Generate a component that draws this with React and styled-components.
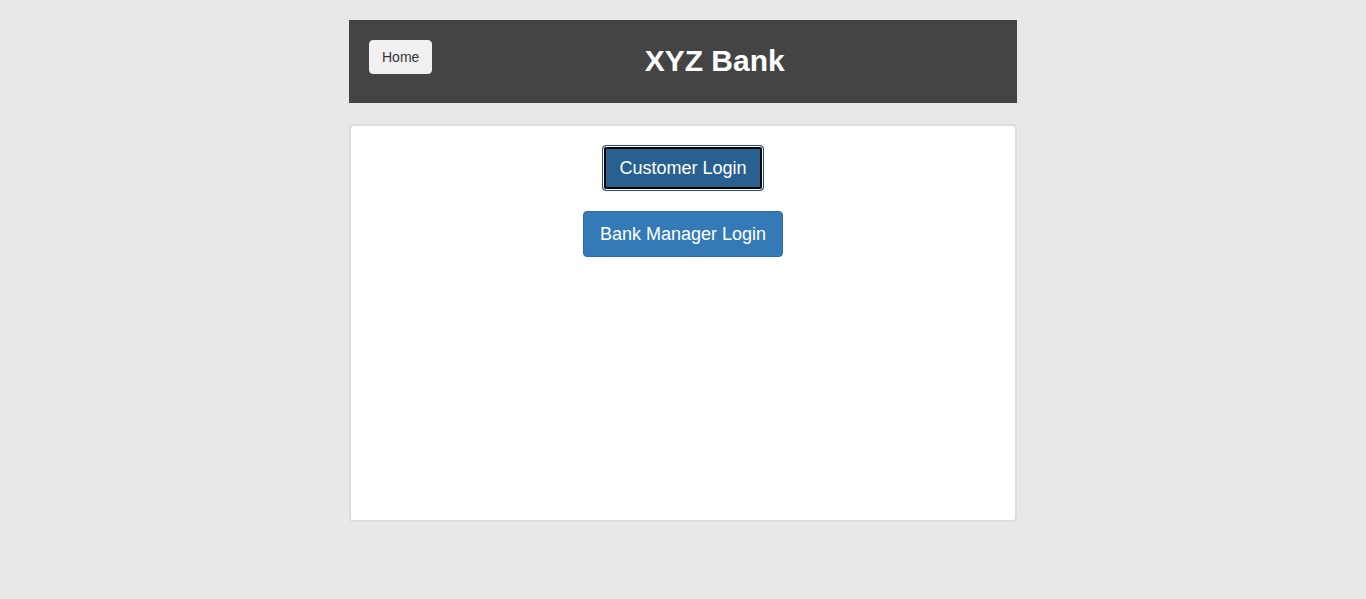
import React from "react";
import styled, { createGlobalStyle } from "styled-components";

const GlobalStyle = createGlobalStyle`
  * { box-sizing: border-box; }
  body {
    margin: 0;
    background: #e8e8e8;
    font-family: "Liberation Sans", Arial, sans-serif;
    color: #333;
  }
`;

const Page = styled.div`
  width: 668px;
  margin: 0 auto;
  padding-top: 20px;
`;

const Header = styled.div`
  display: flex;
  align-items: flex-start;
  height: 83px;
  padding: 20px;
  background: #444444;
`;

const HomeButton = styled.button`
  font-family: "Liberation Sans", Arial, sans-serif;
  font-size: 14px;
  line-height: 20px;
  padding: 6px 12px;
  color: #333;
  background: #f0f0f0;
  border: 1px solid #f0f0f0;
  border-radius: 4px;
  cursor: pointer;
`;

const Title = styled.h1`
  flex: 1;
  margin: 3px 0 0;
  text-align: center;
  color: #fff;
  font-size: 30px;
  line-height: 36px;
  font-weight: bold;
`;

const Card = styled.div`
  display: flex;
  flex-direction: column;
  align-items: center;
  gap: 20px;
  height: 398px;
  margin-top: 21px;
  padding-top: 19px;
  background: #fff;
  border: 2px solid #dcdcdc;
  border-radius: 4px;
`;

const LoginButton = styled.button`
  font-family: "Liberation Sans", Arial, sans-serif;
  font-size: 18px;
  line-height: 24px;
  padding: 10px 16px;
  color: #fff;
  background: ${(p) => (p.$active ? "#286090" : "#337ab7")};
  border: 1px solid ${(p) => (p.$active ? "#1d4f7a" : "#2e6da4")};
  border-radius: 4px;
  box-shadow: ${(p) =>
    p.$active ? "inset 0 0 0 1px #fff, inset 0 0 0 3px #000" : "none"};
  cursor: pointer;
`;

export default function App() {
  return (
    <>
      <GlobalStyle />
      <Page>
        <Header>
          <HomeButton>Home</HomeButton>
          <Title>XYZ Bank</Title>
        </Header>
        <Card>
          <LoginButton $active>Customer Login</LoginButton>
          <LoginButton>Bank Manager Login</LoginButton>
        </Card>
      </Page>
    </>
  );
}
